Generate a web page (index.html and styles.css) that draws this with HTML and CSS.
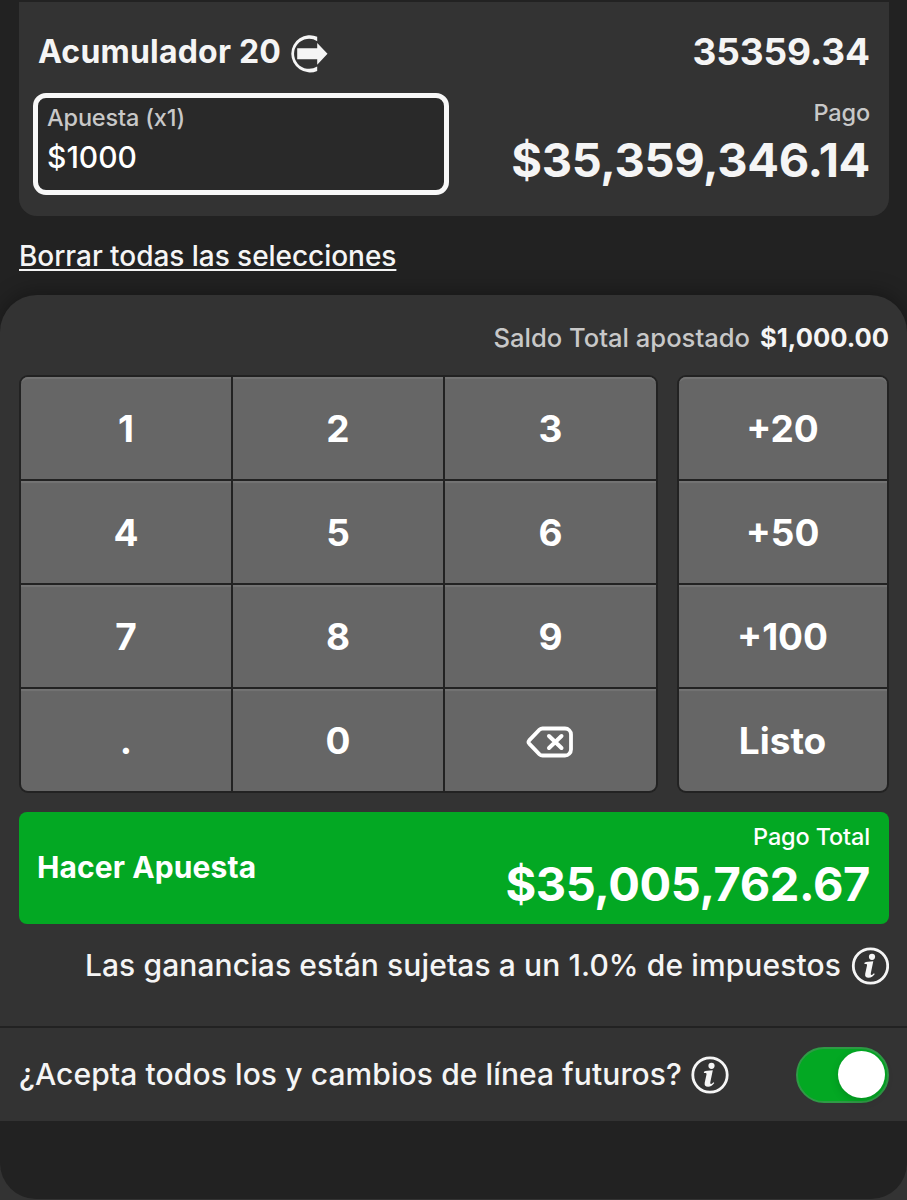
FILE: index.html
```html
<!DOCTYPE html>
<html lang="es">

<head>
    <meta charset="UTF-8" />
    <meta name="viewport" content="width=device-width, initial-scale=1" />
    <title>Cupón de apuestas</title>
    <link rel="stylesheet" href="styles.css">
</head>

<body>
    <div class="betslip">

        <!-- Bet card -->
        <section class="bet-card">
            <div class="bet-header">
                <div class="bet-title">
                    <span class="bet-name">Acumulador 20</span>
                    <svg class="bet-icon" width="38" height="38" viewBox="0 0 38 38">
                        <path d="M27.2 1.7V6.2A15 15 0 1 0 27.2 31.4V35.9A18.6 18.6 0 1 1 27.2 1.7Z" fill="#f5f5f5" />
                        <path d="M7.2 13.3H27.2V8L37.5 18.8L27.2 29.800V24.2H7.2Z" fill="#f5f5f5" />
                    </svg>
                </div>
                <div class="bet-odds">35359.34</div>
            </div>
            <div class="bet-body">
                <div class="stake-box">
                    <div class="stake-label">Apuesta (x1)</div>
                    <div class="stake-value">$1000</div>
                </div>
                <div class="payout">
                    <div class="payout-label">Pago</div>
                    <div class="payout-value">$35,359,346.14</div>
                </div>
            </div>
        </section>

        <div class="clear-row">
            <a href="#" class="clear-link">Borrar todas las selecciones</a>
        </div>

        <!-- Keypad sheet -->
        <section class="sheet">
            <div class="total-stake">
                <span class="total-label">Saldo Total apostado</span>
                <span class="total-value">$1,000.00</span>
            </div>

            <div class="keypad">
                <div class="keys keys-numbers">
                    <button class="key">1</button>
                    <button class="key">2</button>
                    <button class="key">3</button>
                    <button class="key">4</button>
                    <button class="key">5</button>
                    <button class="key">6</button>
                    <button class="key">7</button>
                    <button class="key">8</button>
                    <button class="key">9</button>
                    <button class="key">.</button>
                    <button class="key">0</button>
                    <button class="key" aria-label="Borrar">
                        <svg class="key-icon" width="48" height="32" viewBox="0 0 48 32">
                            <path d="M16.5 2.5H39a6 6 0 0 1 6 6v15a6 6 0 0 1-6 6H16.5Q14.8 29.5 13.5 28.3L3.2 17.6Q1.8 16 3.2 14.4L13.5 3.7Q14.8 2.5 16.5 2.5Z" fill="none" stroke="#fff" stroke-width="3.8" />
                            <path d="M23 10l12.500 12M35.5 10L23 22" fill="none" stroke="#fff" stroke-width="4" stroke-linecap="round" />
                        </svg>
                    </button>
                </div>
                <div class="keys keys-quick">
                    <button class="key">+20</button>
                    <button class="key">+50</button>
                    <button class="key">+100</button>
                    <button class="key">Listo</button>
                </div>
            </div>

            <button class="place-bet">
                <span class="place-text">Hacer Apuesta</span>
                <span class="place-payout">
                    <span class="place-label">Pago Total</span>
                    <span class="place-value">$35,005,762.67</span>
                </span>
            </button>

            <div class="tax-row">
                <span class="tax-text">Las ganancias están sujetas a un 1.0% de impuestos</span>
                <svg class="info-icon" width="38" height="38" viewBox="0 0 38 38">
                    <circle cx="19.5" cy="19" r="17.2" fill="none" stroke="#f5f5f5" stroke-width="2.8" />
                    <circle cx="21" cy="9.8" r="3.1" fill="#f5f5f5" />
                    <path d="M13.5 15.8Q16 14.3 22.3 14.3L19.8 26.2Q19.5 28.2 20.6 28Q21.6 27.8 22.9 26.2L23.8 27Q21.4 30.7 17.6 30.8Q13.5 30.6 14.2 26.8L16 18.5Q16.3 17 15.3 17H13.4Z" fill="#f5f5f5" />
                </svg>
            </div>

            <!-- Line changes -->
            <div class="accept-row">
                <span class="accept-text">¿Acepta todos los y cambios de línea futuros?</span>
                <svg class="info-icon" width="38" height="38" viewBox="0 0 38 38">
                    <circle cx="19" cy="19" r="17.2" fill="none" stroke="#f5f5f5" stroke-width="2.8" />
                    <circle cx="20.5" cy="9.8" r="3.1" fill="#f5f5f5" />
                    <path d="M13 15.8Q15.5 14.3 21.8 14.3L19.3 26.2Q19 28.2 20.1 28Q21.1 27.8 22.4 26.2L23.3 27Q20.9 30.7 17.1 30.8Q13 30.6 13.7 26.8L15.5 18.5Q15.8 17 14.8 17H12.9Z" fill="#f5f5f5" />
                </svg>
                <div class="toggle">
                    <div class="toggle-knob"></div>
                </div>
            </div>
        </section>

        <div class="bottom-wrap">
            <div class="bottom-bar"></div>
        </div>
    </div>
</body>

</html>
```
FILE: styles.css
```css
* {
    margin: 0;
    padding: 0;
    box-sizing: border-box;
    font-family: Inter, "Liberation Sans", sans-serif;
}

body {
    background-color: #222222;
    color: #f5f5f5;
    font-weight: 450;
}

.betslip {
    width: 907px;
    height: 1200px;
    overflow: hidden;
    display: flex;
    flex-direction: column;
}

/* Bet card */
.bet-card {
    margin: 2px 18px 0 19px;
    height: 214px;
    background-color: #333333;
    border-radius: 0 0 18px 18px;
    padding: 26px 19px 0 14px;
    flex-shrink: 0;
}

.bet-header {
    display: flex;
    justify-content: space-between;
    align-items: center;
    height: 47px;
    padding-left: 5px;
}

.bet-title {
    display: flex;
    align-items: center;
    gap: 9px;
}

.bet-name {
    font-size: 32px;
    font-weight: 700;
    letter-spacing: 0.2px;
}

.bet-icon {
    margin-top: 4px;
}

.bet-odds {
    font-size: 37px;
    font-weight: 700;
    letter-spacing: -0.1px;
}

.bet-body {
    display: flex;
    justify-content: space-between;
    margin-top: 18px;
}

.stake-box {
    width: 416px;
    height: 102px;
    background-color: #292929;
    border: 5px solid #f8f8f8;
    border-radius: 13px;
    padding: 5px 9px;
}

.stake-label {
    font-size: 23.5px;
    line-height: 30px;
    color: #c8c8c8;
    letter-spacing: -0.15px;
}

.stake-value {
    font-size: 30px;
    line-height: 40px;
    margin-top: 4px;
    color: #ffffff;
}

.payout {
    text-align: right;
    padding-top: 5px;
}

.payout-label {
    font-size: 23.5px;
    line-height: 30px;
    color: #c8c8c8;
    letter-spacing: -0.15px;
}

.payout-value {
    font-size: 47px;
    line-height: 60px;
    margin-top: 2px;
    font-weight: 700;
    letter-spacing: -0.35px;
}

.clear-row {
    height: 79px;
    padding: 20px 19px 0;
    line-height: 40px;
    flex-shrink: 0;
}

.clear-link {
    font-size: 28px;
    color: #f5f5f5;
    letter-spacing: -0.04px;
    text-decoration: underline;
    text-decoration-thickness: 2px;
    text-underline-offset: 3px;
}

/* Keypad sheet */
.sheet {
    height: 826px;
    background-color: #333333;
    border-radius: 37px 37px 0 0;
    box-shadow: 0 -4px 20px rgba(0, 0, 0, 0.3);
    padding-top: 23px;
    flex-shrink: 0;
}

.total-stake {
    display: flex;
    justify-content: flex-end;
    gap: 10px;
    padding-right: 18px;
    line-height: 40px;
    font-size: 25.6px;
}

.total-label {
    color: #c8c8c8;
}

.total-value {
    font-weight: 700;
}

.keypad {
    display: flex;
    justify-content: space-between;
    margin: 17px 18px 0 19px;
}

.keys {
    display: grid;
    gap: 2px;
    padding: 2px;
    height: 418px;
    background-color: #222222;
    border-radius: 9px;
    overflow: hidden;
}

.keys-numbers {
    width: 639px;
    grid-template-columns: 210px 210px 1fr;
    grid-template-rows: repeat(4, 1fr);
}

.keys-quick {
    width: 212px;
    grid-template-rows: repeat(4, 1fr);
}

.key {
    display: flex;
    align-items: center;
    justify-content: center;
    background-color: #666666;
    border: none;
    box-shadow: inset 0 3px 1px -1px #747474;
    color: #ffffff;
    font-size: 37px;
    font-weight: 700;
    cursor: pointer;
}

.keys-quick .key {
    padding-right: 1px;
}

.keys-numbers .key:nth-child(1),
.keys-quick .key:first-child {
    border-top-left-radius: 7px;
}

.keys-numbers .key:nth-child(3),
.keys-quick .key:first-child {
    border-top-right-radius: 7px;
}

.keys-numbers .key:nth-child(10),
.keys-quick .key:last-child {
    border-bottom-left-radius: 7px;
}

.keys-numbers .key:nth-child(12),
.keys-quick .key:last-child {
    border-bottom-right-radius: 7px;
}

.key-icon {
    margin-top: 4px;
    margin-right: 1px;
}

/* Place bet button */
.place-bet {
    display: flex;
    justify-content: space-between;
    width: 870px;
    height: 112px;
    margin: 19px 0 0 19px;
    padding: 10px 19px 0 18px;
    background-color: #03a823;
    border: none;
    border-radius: 8px;
    color: #ffffff;
    cursor: pointer;
}

.place-text {
    font-size: 30px;
    font-weight: 700;
    line-height: 90px;
    letter-spacing: 0.1px;
}

.place-payout {
    display: flex;
    flex-direction: column;
    text-align: right;
}

.place-label {
    font-size: 23.5px;
    font-weight: 450;
    line-height: 30px;
    letter-spacing: -0.15px;
}

.place-value {
    font-size: 47px;
    font-weight: 700;
    line-height: 60px;
    margin-top: 2px;
    letter-spacing: -0.4px;
}

/* Tax info */
.tax-row {
    display: flex;
    justify-content: flex-end;
    align-items: center;
    gap: 10px;
    height: 102px;
    padding: 0 18px 20px 0;
}

.tax-text,
.accept-text {
    font-size: 30px;
    letter-spacing: 0.1px;
}

.info-icon {
    flex-shrink: 0;
    margin-top: 2px;
}

.accept-row {
    display: flex;
    align-items: center;
    gap: 9px;
    height: 95px;
    border-top: 2px solid #222222;
    padding: 0 18px 2px 19px;
}

.toggle {
    width: 93px;
    height: 56px;
    margin-top: 2px;
    margin-left: auto;
    background-color: #03a823;
    border: 2px solid #2f9a46;
    border-radius: 28px;
    display: flex;
    justify-content: flex-end;
    align-items: center;
    padding-right: 2px;
}

.toggle-knob {
    width: 47px;
    height: 47px;
    border-radius: 50%;
    background-color: #ffffff;
    box-shadow: 0 3px 8px rgba(0, 0, 0, 0.15);
}

/* Bottom */
.bottom-wrap {
    flex: 1;
    background-color: #333333;
    padding-bottom: 1px;
}

.bottom-bar {
    height: 100%;
    background-color: #222222;
    border-radius: 0 0 36px 36px;
}
```
